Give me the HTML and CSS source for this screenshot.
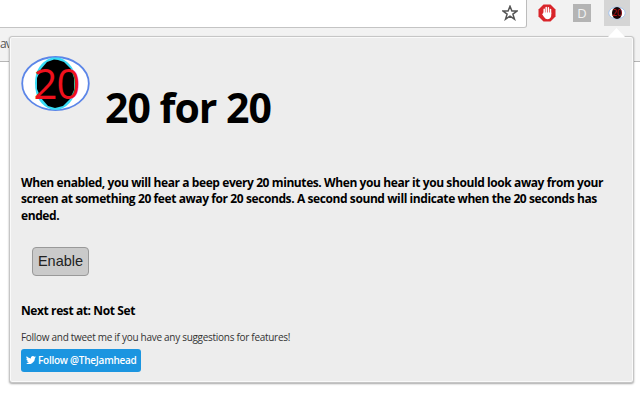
FILE: index.html
```html
<!DOCTYPE html>
<html lang="en">
<head>
    <meta charset="UTF-8">
    <title>20 for 20</title>
    <link rel="stylesheet" href="styles.css">
</head>
<body>
    <!-- Browser toolbar -->
    <div class="toolbar">
        <div class="address-bar">
            <svg class="star" width="16" height="16" viewBox="0 0 16 16">
                <path d="M8 1.3L9.9 6H15L10.9 9.1L12.5 14.2L8 11.1L3.5 14.2L5.1 9.1L1 6H6.1Z" fill="none" stroke="#555" stroke-width="1.5"/>
            </svg>
        </div>
        <div class="extensions">
            <div class="extension">
                <svg width="18" height="18" viewBox="0 0 18 18">
                    <path d="M5.5 .5H12.5L17.5 5.5V12.5L12.5 17.5H5.5L.5 12.5V5.5Z" fill="#d9252a"/>
                    <path d="M6.2 11V5.2M8.200 9V3.400M10.400 9V3.800M12.500 10V5.600" stroke="#fff" stroke-width="1.500" stroke-linecap="round"/>
                    <path d="M5.5 8.500H13.200V12Q12.300 15.300 9.500 15.300Q7.500 15.300 6 13L4 10L5 9.500Z" fill="#fff"/>
                </svg>
            </div>
            <div class="extension"><span class="letter-icon">D</span></div>
            <div class="extension active">
                <svg width="18" height="14" viewBox="0 0 18 14">
                    <ellipse cx="9" cy="7" rx="8.3" ry="6" fill="#fff" stroke="#a5c3ee"/>
                    <ellipse cx="9" cy="7" rx="5" ry="6" fill="#140507"/>
                    <text class="small-number" x="9" y="10" text-anchor="middle">20</text>
                </svg>
            </div>
        </div>
    </div>
    <div class="bookmarks">av</div>

    <!-- Extension popup -->
    <div class="popup">
        <div class="arrow"></div>
        <div class="header">
            <svg class="logo" width="70" height="58" viewBox="0 0 70 58">
                <ellipse cx="34.5" cy="28.6" rx="33.3" ry="26.6" fill="#fff" stroke="#5c86e8" stroke-width="1.8"/>
                <path d="M31 2.500Q14 9 14 28Q14 49 31 54.700H38Q55 49 55 28Q55 9 38 2.500Z" fill="#37dcf6"/>
                <path d="M33 4.5L26 7L20 14L16 23V34L20 43L27 51L34 53L42 51L49 44L53 35V23L50 14L43 7L37 5Z" fill="#000"/>
                <text class="logo-number" x="35.5" y="43.500" text-anchor="middle">20</text>
            </svg>
            <h1>20 for 20</h1>
        </div>
        <p class="description">
            <span class="line-one">When enabled, you will hear a beep every 20 minutes. When you hear it you should look away from your</span>
            <span class="line-two">screen at something 20 feet away for 20 seconds. A second sound will indicate when the 20 seconds has</span>
            <span class="line-three">ended.</span>
        </p>
        <button class="enable-button">Enable</button>
        <p class="next-rest">Next rest at: Not Set</p>
        <p class="suggestions">Follow and tweet me if you have any suggestions for features!</p>
        <a class="follow-button">
            <svg width="10" height="10" viewBox="0 0 24 24">
                <path d="M24 4.6a10 10 0 0 1-2.8.8 5 5 0 0 0 2.1-2.7 10 10 0 0 1-3.1 1.2A4.9 4.9 0 0 0 11.8 8.4 14 14 0 0 1 1.7 3.2a4.9 4.9 0 0 0 1.5 6.6 5 5 0 0 1-2.2-.6 4.9 4.9 0 0 0 3.9 4.9 5 5 0 0 1-2.2.1 4.9 4.9 0 0 0 4.6 3.4A9.9 9.9 0 0 1 0 19.5 14 14 0 0 0 21.5 7.1 10 10 0 0 0 24 4.6Z" fill="#fff"/>
            </svg>
            <span>Follow @TheJamhead</span>
        </a>
    </div>
</body>
</html>
```

FILE: styles.css
```css
body {
    margin: 0;
    height: 400px;
    overflow: hidden;
    background-color: #fff;
    color: #000;
    font-family: "Open Sans", "Segoe UI", sans-serif;
}
/* Browser toolbar */
.toolbar {
    display: flex;
    height: 28px;
    background-color: #f2f2f2;
}
.address-bar {
    box-sizing: border-box;
    width: 527px;
    height: 28px;
    padding: 5px 8px 0 0;
    background-color: #fff;
    border-right: 1px solid #bcbcbc;
    border-bottom: 1px solid #c4c4c4;
    border-radius: 0 0 3px 0;
}
.star {
    display: block;
    margin-left: auto;
}
.extensions {
    display: flex;
    gap: 9px;
    padding-left: 7px;
}
.extension {
    display: flex;
    align-items: center;
    justify-content: center;
    width: 26px;
    height: 26px;
}
.extension.active {
    background-color: #d5d5d5;
}
.letter-icon {
    width: 18px;
    height: 18px;
    background-color: #b4b4b4;
    color: #f2f2f2;
    font: 13px/18px "Open Sans", sans-serif;
    text-align: center;
}
.small-number {
    font: 8.5px "Open Sans", sans-serif;
    fill: #c3141d;
}
.bookmarks {
    box-sizing: border-box;
    height: 34px;
    padding-top: 6px;
    background-color: #f2f2f2;
    border-bottom: 1px solid #b6b6b6;
    color: #555;
    font-size: 12px;
    line-height: 20px;
    letter-spacing: -1px;
}
/* Popup over the page */
.popup {
    position: absolute;
    top: 36px;
    left: 9px;
    box-sizing: border-box;
    width: 625px;
    height: 347px;
    padding: 18px 11px 0;
    background-color: #ededed;
    border: 1px solid #c6c6c6;
    border-radius: 3px;
    box-shadow: inset 0 0 0 1px #fafafa, 0 1px 2px rgba(0, 0, 0, 0.35);
}
.arrow {
    position: absolute;
    top: -9px;
    right: 8px;
    width: 17px;
    height: 9px;
    background-color: #fff;
    clip-path: polygon(50% 0, 100% 100%, 0 100%);
}
.header {
    display: flex;
    height: 119.5px;
}
.logo-number {
    font: 42px "Open Sans", sans-serif;
    letter-spacing: -1px;
    fill: #ef111d;
}
h1 {
    margin: 25px 0 0 14px;
    font-size: 41px;
    line-height: 54px;
    letter-spacing: -1px;
    white-space: nowrap;
}
.description {
    margin: 0;
    font-size: 12px;
    font-weight: 700;
    line-height: 16.5px;
    white-space: nowrap;
}
.description span {
    display: block;
}
.line-one {
    letter-spacing: -0.41px;
}
.line-two {
    letter-spacing: -0.41px;
}
.line-three {
    letter-spacing: -0.4px;
}
.enable-button {
    display: block;
    width: 57px;
    height: 29px;
    margin: 22.5px 0 0 11px;
    padding: 0;
    background-color: #cacaca;
    border: 1px solid #999;
    border-radius: 4px;
    color: #222;
    font: 14.5px "Liberation Sans", Arial, sans-serif;
}
.next-rest {
    margin: 25px 0 0;
    font-size: 12px;
    font-weight: 700;
    line-height: 20px;
    letter-spacing: -0.4px;
}
.suggestions {
    margin: 7px 0 0;
    color: #333;
    font-size: 10px;
    line-height: 18px;
    letter-spacing: -0.29px;
}
.follow-button {
    display: flex;
    align-items: center;
    gap: 2px;
    box-sizing: border-box;
    width: 120px;
    height: 23px;
    margin-top: 3px;
    padding-left: 5px;
    background-color: #1b95e0;
    border-radius: 3px;
    color: #fff;
    font-size: 10px;
    font-weight: 600;
    letter-spacing: -0.25px;
    white-space: nowrap;
}
```
